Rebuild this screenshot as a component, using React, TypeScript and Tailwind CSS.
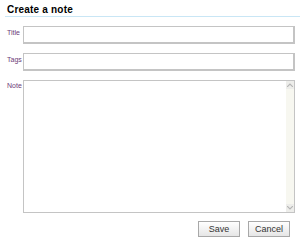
import React from "react";

export default function App() {
  return (
    <div className="w-[300px] h-[244px] bg-white relative overflow-hidden" style={{ fontFamily: '"Liberation Sans", Arial, sans-serif' }}>
      <div className="pl-[7px] pt-[3px] h-[16px] text-[10px] font-bold text-black leading-[13px] tracking-[0.2px]">Create a note</div>
      <div className="ml-[5px] h-px bg-[#c9e6f5]" />
      <div className="flex flex-col gap-[9px] mt-[9px] pl-[7px] pr-[5px]">
        <div className="flex">
          <div className="w-[16px] text-[7px] text-[#6c3b78] leading-[10px] pt-[2px]">Title</div>
          <div className="flex-1 h-[18px] border border-[#c4c4c4] border-r-[2px] border-b-[2px] bg-white" />
        </div>
        <div className="flex">
          <div className="w-[16px] text-[7px] text-[#6c3b78] leading-[10px] pt-[2px]">Tags</div>
          <div className="flex-1 h-[18px] border border-[#c4c4c4] border-r-[2px] border-b-[2px] bg-white" />
        </div>
        <div className="flex">
          <div className="w-[16px] text-[7px] text-[#6c3b78] leading-[10px] pt-[1px]">Note</div>
          <div className="flex-1 h-[133px] border border-[#c4c4c4] bg-white flex justify-end">
            <div className="w-[8px] bg-[#f7f7f0] flex flex-col justify-between">
              <div className="h-[8px] bg-[#ededea] flex items-center justify-center">
                <svg width="6" height="4" viewBox="0 0 6 4"><path d="M0 4 L3 1 L6 4" fill="none" stroke="#b5b5b5" strokeWidth="1.2" /></svg>
              </div>
              <div className="h-[8px] bg-[#ededea] flex items-center justify-center">
                <svg width="6" height="4" viewBox="0 0 6 4"><path d="M0 0 L3 3 L6 0" fill="none" stroke="#b5b5b5" strokeWidth="1.2" /></svg>
              </div>
            </div>
          </div>
        </div>
      </div>
      <div className="flex justify-end gap-[8px] pr-[10px] mt-[8px]">
        <button className="w-[42px] h-[16px] border border-[#a8a8a8] bg-gradient-to-b from-white to-[#e6e6e6] text-[9px] text-[#333] leading-[14px]">Save</button>
        <button className="w-[42px] h-[16px] border border-[#a8a8a8] bg-gradient-to-b from-white to-[#e6e6e6] text-[9px] text-[#333] leading-[14px]">Cancel</button>
      </div>
    </div>
  );
}
